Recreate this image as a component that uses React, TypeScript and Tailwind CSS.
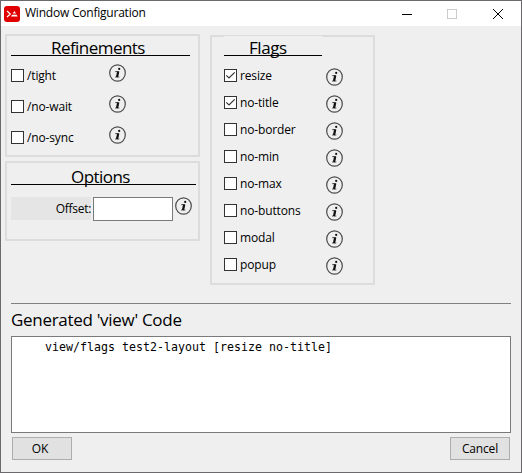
import React from "react";

function Info({ className = "" }: { className?: string }) {
  return (
    <svg className={`block h-[18px] w-[17px] shrink-0 ${className}`} viewBox="0 0 17 18" fill="none">
      <ellipse cx="8.5" cy="9" rx="7.8" ry="8.2" stroke="#4a4a4a" strokeWidth="1.2" />
      <circle cx="10.2" cy="4.9" r="1.1" fill="#111" />
      <path d="M6.3 7.6H9.9L8.5 13H10.3M6.2 13.1L8.8 12.8" stroke="#111" strokeWidth="0.8" />
      <path d="M9.1 7.8L7.9 13" stroke="#111" strokeWidth="2" />
    </svg>
  );
}

function Check({ label, checked = false, className = "" }: { label: string; checked?: boolean; className?: string }) {
  return (
    <div className={`flex h-[13px] items-center ${className}`}>
      <span className="block h-[13px] w-[13px] shrink-0 border border-[#333] bg-white">
        {checked && (
          <svg className="block h-[11px] w-[11px]" viewBox="0 0 11 11" fill="none">
            <path d="M1.3 5.3L4 8L9.7 2.3" stroke="#333" strokeWidth="1.2" />
          </svg>
        )}
      </span>
      <span className="ml-[3px] whitespace-nowrap leading-4">{label}</span>
    </div>
  );
}

const refinements = ["/tight", "/no-wait", "/no-sync"];
const flags = ["resize", "no-title", "no-border", "no-min", "no-max", "no-buttons", "modal", "popup"];

export default function App() {
  return (
    <div className="flex h-[473px] w-[522px] flex-col border border-[#6b696b] bg-[#efefef] font-['Open_Sans','Noto_Sans',sans-serif] text-[12px] tracking-[-0.15px] text-black">
      <header className="flex h-[25px] shrink-0 items-center bg-white pl-[3px]">
        <svg className="h-4 w-4" viewBox="0 0 16 16" fill="none">
          <rect width="16" height="16" rx="3" fill="#e00000" />
          <path d="M3 5L6.3 8L3 11" stroke="#fff" strokeWidth="1.2" />
          <path d="M10.4 5L12 7.6H8.8ZM8 8.7H12.7L13.7 10.6H7Z" fill="#fff" />
        </svg>
        <h1 className="ml-[5px] -mt-px whitespace-nowrap tracking-[-0.22px]">Window Configuration</h1>
        <svg className="ml-auto mr-[17px] h-[12px] w-[104px]" viewBox="0 0 104 12" fill="none" shapeRendering="crispEdges">
          <path d="M2 6.5H12" stroke="#000" />
          <rect x="47.5" y="1.5" width="9" height="9" stroke="#ccc" />
          <path d="M93 1L103 11M103 1L93 11" stroke="#000" shapeRendering="auto" />
        </svg>
      </header>

      <main className="flex h-[259px] shrink-0 items-start pl-[4px] pt-[8px]">
        <div className="flex w-[195px] flex-col gap-[4px]">
          <section className="h-[123px] rounded-[1px] border-2 border-[#dcdcdc] pl-[4px]">
            <h2 className="h-[20px] w-[179px] border-b border-black pl-[40px] text-[17px] leading-[24px] tracking-[-0.55px]">Refinements</h2>
            <div className="flex flex-col gap-[13px] pt-[8px]">
              {refinements.map((r) => (
                <div key={r} className="flex h-[18px] items-start">
                  <Check label={r} className="mt-[5px] w-[98px]" />
                  <Info />
                </div>
              ))}
            </div>
          </section>
          <section className="h-[80px] rounded-[1px] border-2 border-[#dcdcdc] pl-[4px]">
            <h2 className="h-[22px] w-[185px] border-b border-black pl-[60px] text-[17px] leading-[28px] tracking-[-0.55px]">Options</h2>
            <div className="flex items-start pt-[12px]">
              <label className="h-[23px] w-[80px] bg-[#e5e5e5] text-right leading-[24px] tracking-[-0.3px]">Offset:</label>
              <div className="ml-[2px] h-[24px] w-[80px] border border-[#7a7a7a] bg-white" />
              <Info className="ml-[2px]" />
            </div>
          </section>
        </div>

        <section className="ml-[10px] mt-px h-[250px] w-[165px] rounded-[1px] border-2 border-[#dcdcdc] pl-[12px]">
          <h2 className="-mt-px h-[20px] w-[98px] border-b border-black bg-[#efefef] pl-[25px] text-[17px] leading-[24px] tracking-[-0.45px]">Flags</h2>
          <div className="flex flex-col gap-[9px] pt-[12px]">
            {flags.map((f, i) => (
              <div key={f} className="flex h-[18px] items-start">
                <Check label={f} checked={i < 2} className="mt-px w-[102px]" />
                <Info />
              </div>
            ))}
          </div>
        </section>
      </main>

      <section className="mx-[10px] mt-[18px] border-t border-[#808080]">
        <h2 className="h-[32px] text-[17px] leading-[31px] tracking-[-0.3px]">Generated 'view' Code</h2>
        <pre className="h-[97px] border border-[#7a7a7a] bg-white pl-[33px] pt-[2px] font-['DejaVu_Sans_Mono',monospace] text-[11.6px] leading-[16px] tracking-[0.02px]">view/flags test2-layout [resize no-title]</pre>
      </section>
      <footer className="flex justify-between pl-[11px] pr-[11px] pt-[4px]">
        <button className="h-[23px] w-[60px] border border-[#adadad] bg-[#e1e1e1] pr-1 leading-[21px]">OK</button>
        <button className="h-[23px] w-[60px] border border-[#adadad] bg-[#e1e1e1] leading-[21px]">Cancel</button>
      </footer>
    </div>
  );
}
